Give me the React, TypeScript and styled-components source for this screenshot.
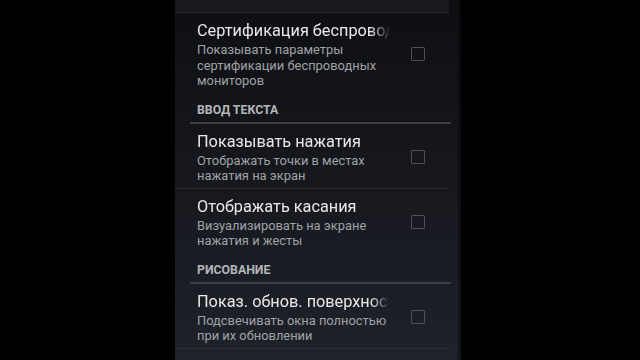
import styled, { createGlobalStyle } from 'styled-components';

type Row =
  | { kind: 'header'; title: string }
  | { kind: 'item'; title: string; summary: string[] };

const rows: Row[] = [
  {
    kind: 'item',
    title: 'Сертификация беспроводных мониторов',
    summary: ['Показывать параметры', 'сертификации беспроводных', 'мониторов'],
  },
  { kind: 'header', title: 'ВВОД ТЕКСТА' },
  {
    kind: 'item',
    title: 'Показывать нажатия',
    summary: ['Отображать точки в местах', 'нажатия на экран'],
  },
  {
    kind: 'item',
    title: 'Отображать касания',
    summary: ['Визуализировать на экране', 'нажатия и жесты'],
  },
  { kind: 'header', title: 'РИСОВАНИЕ' },
  {
    kind: 'item',
    title: 'Показ. обнов. поверхностей',
    summary: ['Подсвечивать окна полностью', 'при их обновлении'],
  },
  {
    kind: 'item',
    title: 'Показывать границы макета',
    summary: ['Показывать границы клипа, поля', 'и т. д.'],
  },
];

export default function App() {
  return (
    <>
      <GlobalStyle />
      <Screen>
        <Panel>
          <PrevItemTail />
          {rows.map((row, idx) => {
            const next = rows[idx + 1];
            if (row.kind === 'header') {
              return (
                <Header key={idx}>
                  <HeaderText>{row.title}</HeaderText>
                </Header>
              );
            }
            return (
              <Item key={idx} $divided={!next || next.kind === 'item'}>
                <ItemText>
                  <ItemTitle>{row.title}</ItemTitle>
                  {row.summary.map((line, i) => (
                    <SummaryLine key={i}>{line}</SummaryLine>
                  ))}
                </ItemText>
                <Checkbox />
              </Item>
            );
          })}
        </Panel>
      </Screen>
    </>
  );
}

const GlobalStyle = createGlobalStyle`
  html, body {
    margin: 0;
    padding: 0;
    background: #000;
    overflow: hidden;
  }
`;

const Screen = styled.div`
  width: 640px;
  height: 360px;
  background: #000;
  overflow: hidden;
  display: flex;
`;

const Panel = styled.div`
  margin-left: 175px;
  width: 286px;
  height: 360px;
  overflow: hidden;
  background: linear-gradient(180deg, #0e0f13 0%, #15171c 45%, #1e222a 100%);
  box-shadow: inset -3px 0 0 rgba(0, 0, 0, 0.35);
  font-family: Roboto, 'Noto Sans', sans-serif;
`;

const PrevItemTail = styled.div`
  height: 12px;
  margin-right: 12px;
  background: rgba(255, 255, 255, 0.045);
  border-bottom: 1px solid #2a2c31;
`;

const Item = styled.div<{ $divided: boolean }>`
  display: flex;
  align-items: center;
  padding: 7px 0 4px 22px;
  margin-right: 12px;
  border-bottom: 1px solid ${({ $divided }) => ($divided ? '#2a2c32' : 'transparent')};
`;

const ItemText = styled.div`
  width: 193px;
  display: flex;
  flex-direction: column;
`;

const ItemTitle = styled.div`
  font-size: 16.3px;
  line-height: 22px;
  color: #e8e8e8;
  white-space: nowrap;
  overflow: hidden;
  -webkit-mask-image: linear-gradient(90deg, #000 90%, transparent 100%);
  mask-image: linear-gradient(90deg, #000 90%, transparent 100%);
`;

const SummaryLine = styled.div`
  font-size: 12.9px;
  line-height: 15.5px;
  color: #a0a2a6;
  white-space: nowrap;
`;

const Checkbox = styled.div`
  width: 12px;
  height: 12px;
  margin-left: 21px;
  border: 1.5px solid #4d5056;
  border-radius: 1px;
`;

const Header = styled.div`
  margin-left: 15px;
  margin-right: 10px;
  padding: 9px 0 5px 7px;
  border-bottom: 2px solid #3b3e45;
`;

const HeaderText = styled.div`
  font-size: 12.3px;
  line-height: 14px;
  font-weight: 700;
  color: #b4b6ba;
`;
